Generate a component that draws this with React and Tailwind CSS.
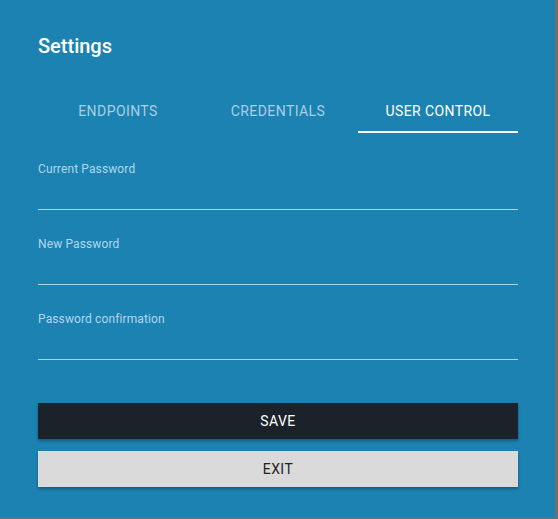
import React from 'react';

const fields = ['Current Password', 'New Password', 'Password confirmation'];
const tabs = ['ENDPOINTS', 'CREDENTIALS', 'USER CONTROL'];

export default function App() {
  return (
    <div className="w-[558px] h-[519px] bg-[#6b6f70] font-['Roboto',sans-serif]">
      <div className="w-[555px] h-[517px] bg-[#1c82b2] px-[38px] pt-[34px] pr-[37px]">
        <h2 className="text-[20px] leading-[24px] font-medium text-white">Settings</h2>

        <div className="mt-[32px] flex w-[480px]">
          {tabs.map((t, i) => (
            <div
              key={t}
              className={`flex-1 h-[43px] flex items-center justify-center text-[14px] pt-[1px] tracking-[0.03em] border-b-2 ${
                i === 2 ? 'text-white border-white' : 'text-[#a9d0e3] border-transparent'
              }`}
            >
              {t}
            </div>
          ))}
        </div>

        <div className="mt-[27px] w-[480px] flex flex-col gap-[25px]">
          {fields.map((f) => (
            <div key={f} className="h-[50px] pt-[1px] border-b border-[#a5d3ea] flex flex-col">
              <span className="text-[12px] leading-[16px] text-[#b2d7ea] tracking-[0.01em]">{f}</span>
            </div>
          ))}
        </div>

        <div className="mt-[43px] w-[480px] flex flex-col gap-[12px]">
          <button className="h-[36px] bg-[#1b222a] text-white text-[14px] tracking-[0.03em] shadow-[0_2px_3px_rgba(0,0,0,0.3)]">
            SAVE
          </button>
          <button className="h-[36px] bg-[#dadada] text-[#222] text-[14px] tracking-[0.03em] shadow-[0_2px_3px_rgba(0,0,0,0.3)]">
            EXIT
          </button>
        </div>
      </div>
    </div>
  );
}
